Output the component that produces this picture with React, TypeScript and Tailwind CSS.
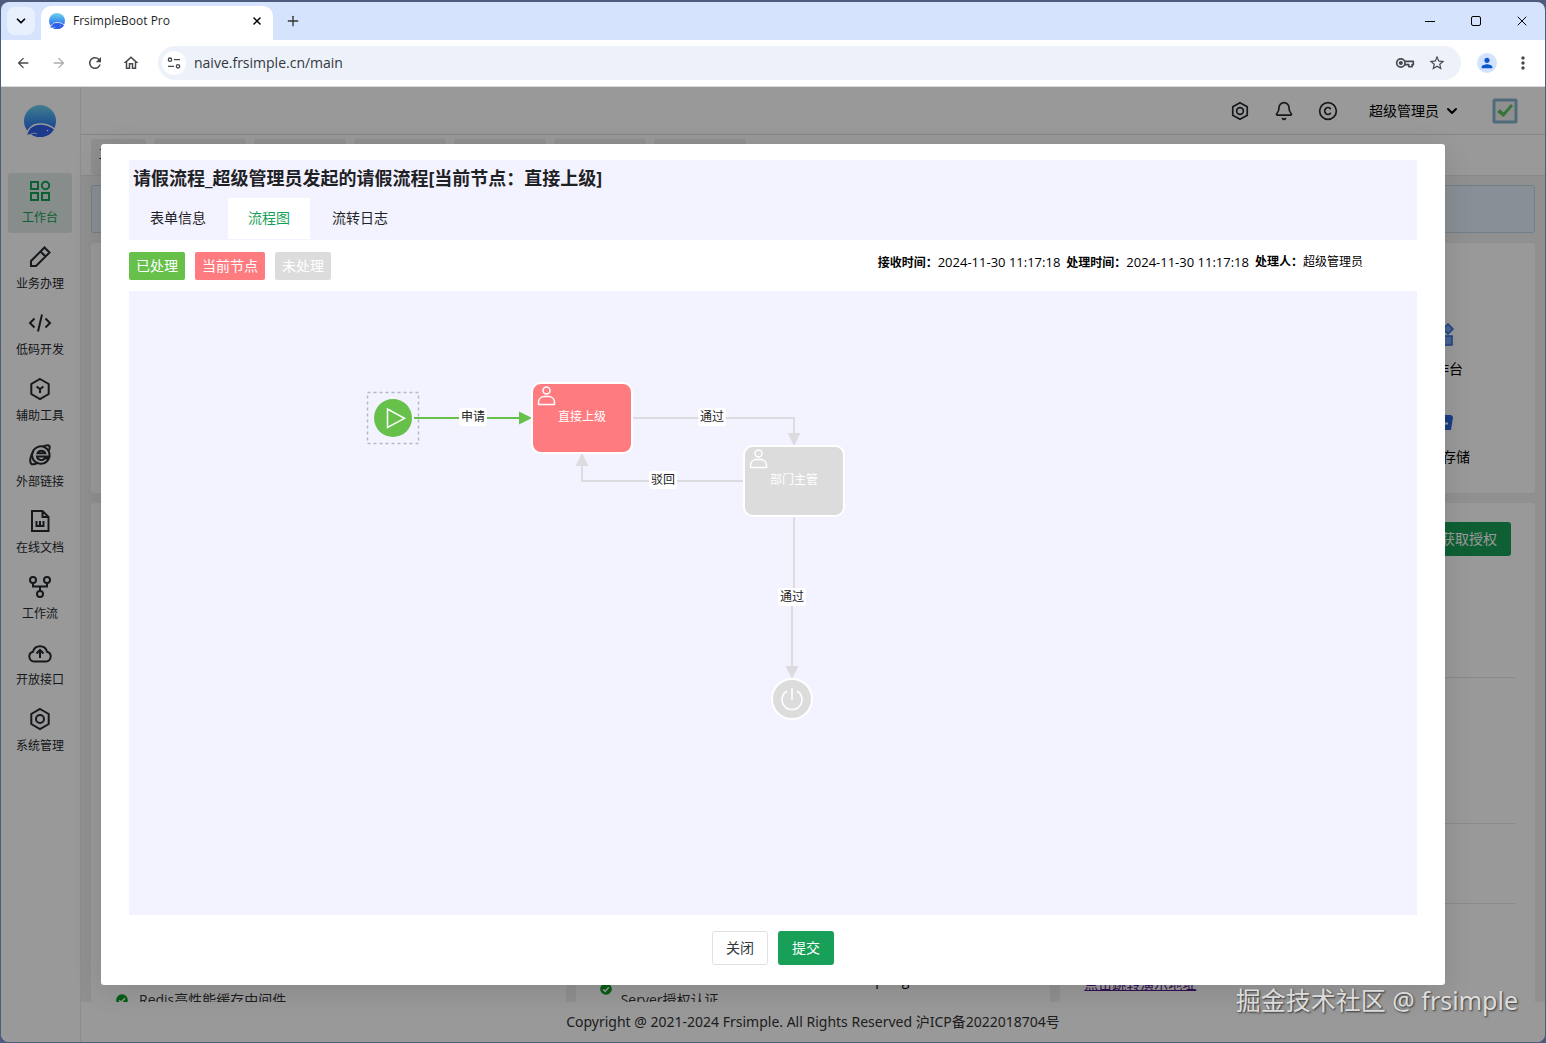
import React, { useState } from 'react';
import { Bell, ChevronDown, Copyright, Plus, X } from 'lucide-react';
import { MdArrowBack, MdArrowForward, MdMoreVert, MdOutlineHome, MdPerson, MdRefresh, MdStarBorder } from 'react-icons/md';

const FONT = "font-['Open_Sans','Noto_Sans_CJK_SC',sans-serif]";
const FONT_WIDE = "font-['Noto_Sans','Noto_Sans_CJK_SC',sans-serif]";

function Icon({ children, className = 'size-6' }: { children: React.ReactNode; className?: string }) {
  return (
    <svg viewBox="0 0 24 24" fill="none" stroke="currentColor" strokeWidth="2" className={className} aria-hidden="true">
      {children}
    </svg>
  );
}

function Logo({ className }: { className: string }) {
  return (
    <svg viewBox="0 0 32 32" className={className} aria-hidden="true">
      <defs>
        <linearGradient id="logo" x1="0" y1="0" x2="0" y2="1">
          <stop offset="0" stopColor="#6fd3ec" />
          <stop offset="0.5" stopColor="#3d93f0" />
          <stop offset="1" stopColor="#2a55e8" />
        </linearGradient>
      </defs>
      <circle cx="16" cy="16" r="16" fill="url(#logo)" />
      <path d="M0 32V26l4-1c2 0 3 2 3 4l-2 3z" fill="#fff" />
      <path d="M2 30c1-7 7-11 14-11s11 2 14 5c-2 5-8 8-14 8-4 0-7-1-9-3z" fill="#2f5fea" />
      <path d="M2 31C4 23 9 19 16 19s11 2 14.500 5" fill="none" stroke="#fff" strokeWidth="1.500" />
      <path d="M7 29c2-1 4-1 6 0" fill="none" stroke="#fff" strokeWidth="0.800" />
      <circle cx="23.500" cy="25.500" r="0.800" fill="#fff" />
    </svg>
  );
}

const settingIcon = (
  <>
    <path d="M12 2l8.700 5v10L12 22l-8.700-5V7z" />
    <circle cx="12" cy="12" r="4" />
  </>
);

const menu = [
  {
    label: '工作台',
    icon: (
      <>
        <path d="M3 3h7v7H3zM3 14h7v7H3zM14 14h7v7h-7z" />
        <circle cx="17.500" cy="6.500" r="3.700" />
      </>
    ),
  },
  { label: '业务办理', icon: <path d="M3 21v-5L16.500 2.500l5 5L8 21zM12.500 6.500l5 5" /> },
  { label: '低码开发', icon: <path d="M6.500 7.500L2 12l4.500 4.500M17.500 7.500L22 12l-4.500 4.500M14 3.500l-4 17" /> },
  { label: '辅助工具', icon: <path d="M12 2l8.700 5v10L12 22l-8.700-5V7zM8.500 9.500L12 12l3.500-2.500M12 12v4" /> },
  {
    label: '外部链接',
    icon: (
      <>
        <path d="M20.800 15.500A8.700 8.700 0 1 1 21.500 12v1.500H9a4.300 4.300 0 0 0 7.500 2z" />
        <path d="M9.500 10.300h7.800a4.200 4.200 0 0 0-7.800 0z" />
        <path d="M14.500 3.700c3.200-1.500 6-1.900 6.900-.6.700 1 .2 2.900-.9 4.900M5.500 8C2.500 12.500 1.300 18.500 3 20.500c1.300 1.500 4 .8 7-.9" />
      </>
    ),
  },
  { label: '在线文档', icon: <path d="M14.500 2H4v20h16.500V8zM14.500 2v6h6M8.500 12v5h7v-5M12 12v5" /> },
  {
    label: '工作流',
    icon: (
      <>
        <circle cx="5" cy="5" r="3" />
        <circle cx="19" cy="5" r="3" />
        <circle cx="12" cy="19" r="3" />
        <path d="M5 8v3.500h14V8M12 11.500V16" />
      </>
    ),
  },
  { label: '开放接口', icon: <path d="M6 20.500a5 5 0 0 1-1-9.800 7.200 7.200 0 0 1 14 0 5 5 0 0 1-1 9.800zM12 17V9M8.500 12.500L12 9l3.500 3.500" /> },
  { label: '系统管理', icon: settingIcon },
];

function TabStrip() {
  return (
    <div className="flex h-[38px] shrink-0 items-center bg-[#d5e3fd]">
      <button aria-label="搜索标签页" className="ml-1.5 flex size-7 items-center justify-center rounded-lg bg-[#e8f0fe]">
        <ChevronDown className="size-3.5" strokeWidth={3} />
      </button>
      <div className="ml-1.5 flex h-[34px] w-[232px] items-center self-end rounded-t-[10px] bg-white pb-1 pl-2 pr-2">
        <Logo className="size-4" />
        <span className="ml-2 flex-1 text-[12px] leading-4 text-[#1f1f1f]">FrsimpleBoot Pro</span>
        <button aria-label="关闭标签页" className="flex size-4 items-center justify-center">
          <X className="size-3" strokeWidth={3} />
        </button>
      </div>
      <button aria-label="新标签页" className="ml-3 flex size-4 items-center justify-center text-[#333]">
        <Plus className="size-4" />
      </button>
      <div className="ml-auto flex">
        <button aria-label="最小化" className="flex w-[46px] items-center justify-center">
          <span className="h-px w-2.5 bg-black" />
        </button>
        <button aria-label="最大化" className="flex w-[46px] items-center justify-center">
          <span className="size-2.5 rounded-[2px] border border-black" />
        </button>
        <button aria-label="关闭" className="flex w-[46px] items-center justify-center">
          <X className="size-4" strokeWidth={1.5} />
        </button>
      </div>
    </div>
  );
}

function AddressBar() {
  return (
    <div className="flex h-[47px] shrink-0 items-center border-b border-[#d8dbe0] bg-white pl-3.5 text-[#45494d]">
      <button aria-label="后退" className="mr-5"><MdArrowBack className="size-4" /></button>
      <button aria-label="前进" className="mr-[19px] text-[#aaadb0]"><MdArrowForward className="size-4" /></button>
      <button aria-label="刷新" className="mr-[18px]"><MdRefresh className="size-4.5" /></button>
      <button aria-label="主页" className="mr-[18px]"><MdOutlineHome className="size-4.5" /></button>
      <div className="flex h-[34px] flex-1 items-center rounded-full bg-[#edf2fa] pl-1 pr-[15px]">
        <span className="flex size-6 items-center justify-center rounded-full bg-white">
          <Icon className="size-4">
            <circle cx="6" cy="7" r="2.500" />
            <circle cx="18" cy="17" r="2.500" />
            <path d="M12 7h9M3 17h9" />
          </Icon>
        </span>
        <input aria-label="地址栏" defaultValue="naive.frsimple.cn/main" className="ml-2 flex-1 bg-transparent text-[14px] leading-5 text-[#33373b] outline-none" />
        <Icon className="size-5">
          <circle cx="7" cy="12" r="5" />
          <circle cx="7" cy="12" r="1.500" fill="currentColor" />
          <path d="M11.500 10H22v4h-1.500v2.500h-4V14h-5" strokeLinejoin="round" />
        </Icon>
        <button aria-label="添加书签" className="ml-[13px]"><MdStarBorder className="size-4.5" /></button>
      </div>
      <button aria-label="个人资料" className="ml-4 flex size-5 items-center justify-center rounded-full bg-[#d3e3fd] text-[#0b57d0]">
        <MdPerson className="size-4" />
      </button>
      <button aria-label="更多" className="ml-4 mr-3"><MdMoreVert className="size-5" /></button>
    </div>
  );
}

function Sidebar() {
  return (
    <nav className="flex w-20 shrink-0 flex-col items-center border-r border-[#ebebeb] bg-white pr-px pt-[18px]">
      <Logo className="size-8" />
      <ul className="mt-9 flex flex-col gap-1.5">
        {menu.map((item, i) => (
          <li key={item.label}>
            <a
              href="#"
              className={
                i === 0
                  ? 'flex h-[60px] w-16 flex-col items-center rounded-[3px] bg-[#dfebe6] pt-1.5 text-[#18a058]'
                  : 'flex h-[60px] w-16 flex-col items-center rounded-[3px] pt-1.5 text-[#262a2e]'
              }
            >
              <Icon>{item.icon}</Icon>
              <span className="mt-[7px] text-[12px] leading-4">{item.label}</span>
            </a>
          </li>
        ))}
      </ul>
    </nav>
  );
}

function CheckDot() {
  return (
    <svg viewBox="0 0 24 24" className="size-3.5 shrink-0" aria-hidden="true">
      <circle cx="12" cy="12" r="10" fill="#0a9c22" />
      <path d="M7 12.500l3.500 3.500L17 9" fill="none" stroke="#fff" strokeWidth="2.500" />
    </svg>
  );
}

function Dashboard() {
  return (
    <div className="flex min-w-0 flex-1 flex-col bg-white">
      <header className="flex h-12 shrink-0 items-center justify-end border-b border-[#e0e0e0] pr-[27px] text-[#262a2e]">
        <button aria-label="设置" className="mr-6"><Icon className="size-5">{settingIcon}</Icon></button>
        <button aria-label="通知" className="mr-6"><Bell className="size-5" /></button>
        <button aria-label="版权" className="mr-[31px]"><Copyright className="size-5" /></button>
        <button className="flex items-center gap-[5px] text-[14px] leading-5 text-black">
          超级管理员
          <ChevronDown className="size-4" strokeWidth={3} />
        </button>
        <svg viewBox="0 0 26 26" className="ml-8 size-6.5" aria-hidden="true">
          <rect x="2" y="2" width="22" height="22" rx="1" fill="#eee" stroke="#86b4cc" strokeWidth="3" />
          <path d="M5 14l3-3 3.500 3.500L19 6l2 2-9.500 11z" fill="#5cc45c" />
        </svg>
      </header>
      <div className="flex h-[41px] shrink-0 gap-2 border-b border-[#e4e4e4] pl-2.5 pt-1">
        <span className="w-[55px] rounded-[3px] bg-[#eee] pl-2 text-[12px] leading-8">工作台</span>
        {[1, 2, 3, 4, 5, 6].map((n) => (
          <span key={n} className="h-8 w-[92px] rounded-[3px] bg-[#f1f1f1]" />
        ))}
      </div>

      <div className="flex min-h-0 flex-1 flex-col gap-2.5 overflow-hidden bg-[#f0f0f0] px-2.5 pt-[9px]">
        <div className="h-12 shrink-0 rounded-[3px] border border-[#c2d2e2] bg-[#e4eefb]" />
        <section className="flex h-[250px] shrink-0 flex-col items-end rounded bg-white pr-[65px] pt-20 text-[14px] leading-5">
          <a href="#" className="flex w-14 flex-col items-center">
            <svg viewBox="0 0 24 24" className="size-6" fill="#7ba4ee" stroke="#2f6fe0" strokeWidth="1.500" aria-hidden="true">
              <path d="M2 2h8v8H2zM2 13h8v9H2zM13 13h9v9h-9zM18 1l5 5-5 5-5-5z" />
            </svg>
            <span className="mt-3">工作台</span>
          </a>
          <a href="#" className="mt-8 flex w-14 flex-col items-center">
            <svg viewBox="0 0 24 24" className="size-6" aria-hidden="true">
              <path d="M2 4h19l2 2-2 13H4z" fill="#2766da" />
              <path d="M13 12.500h5" stroke="#fff" strokeWidth="2" />
            </svg>
            <span className="mt-3">对象存储</span>
          </a>
        </section>
        <div className="grid min-h-0 flex-1 grid-cols-3 gap-2.5 text-[14px] leading-5">
          <section className="flex flex-col justify-end rounded-t bg-white pl-6">
            <p className="-mb-2 flex items-center gap-2.5 text-[#333]">
              <CheckDot />
              Redis高性能缓存中间件
            </p>
          </section>
          <section className="flex flex-col justify-end rounded-t bg-white pl-[23px]">
            <p className="pl-[269px]">Spring</p>
            <p className="-mb-2 flex items-start gap-2 text-[#333]">
              <span className="-mt-2"><CheckDot /></span>
              Server授权认证
            </p>
          </section>
          <section className="flex flex-col rounded-t bg-white px-5 pt-[19px]">
            <button className="mr-1 h-[34px] w-[84px] self-end rounded-[3px] bg-[#18a058] text-white">获取授权</button>
            <div className="mt-[121px] border-t border-[#e6e6e6]" />
            <div className="mt-[145px] border-t border-[#e6e6e6]" />
            <div className="mt-[79px] border-t border-[#e6e6e6]" />
            <a href="#" className="mb-2 mt-auto pl-1 text-[#551a8b] underline">点击跳转演示地址</a>
          </section>
        </div>
      </div>
      <footer className={`flex h-10 shrink-0 items-center justify-center text-[14px] leading-5 text-[#333] ${FONT_WIDE}`}>
        Copyright @ 2021-2024 Frsimple. All Rights Reserved 沪ICP备2022018704号
      </footer>
    </div>
  );
}

function EdgeLabel({ x, y, text }: { x: number; y: number; text: string }) {
  return (
    <g>
      <rect x={x - 14} y={y - 9} width="28" height="18" rx="3" fill="#fff" />
      <text x={x} y={y + 4} textAnchor="middle" fill="#222">{text}</text>
    </g>
  );
}

function TaskNode({ x, y, color, text }: { x: number; y: number; color: string; text: string }) {
  return (
    <g transform={`translate(${x} ${y})`}>
      <rect x="-1" y="-1" width="100" height="70" rx="9" fill={color} stroke="#fff" strokeWidth="2" />
      <g fill="none" stroke="#fff" strokeWidth="1.500">
        <circle cx="13.500" cy="6.500" r="3.500" />
        <path d="M5.500 20.500v-2c0-3.500 2.500-6 6-6h4c3.500 0 6 2.500 6 6v2z" strokeLinejoin="round" />
      </g>
      <text x="49" y="37" textAnchor="middle" fill="#fff">{text}</text>
    </g>
  );
}

function FlowChart() {
  return (
    <svg className="h-full w-full text-[12px]" role="img" aria-label="流程图">
      <rect x="238.500" y="101.500" width="51" height="51" fill="none" stroke="#b5b6c8" strokeWidth="1.500" strokeDasharray="3 3" />
      <circle cx="264" cy="127" r="19" fill="#66c04a" />
      <path d="M258.500 118v18.500l17-9.200z" fill="none" stroke="#fff" strokeWidth="1.500" />

      <path d="M285 127h107" stroke="#66c04a" strokeWidth="2" />
      <path d="M390 120.500l13 6.500-13 6.500z" fill="#66c04a" />
      <g fill="none" stroke="#dcdce0" strokeWidth="2">
        <path d="M504 127h161v16" />
        <path d="M614 190H453v-16" />
        <path d="M665 226v80M663 306v70" />
      </g>
      <g fill="#dcdce0">
        <path d="M658.500 142h13l-6.500 13z" />
        <path d="M446.500 175h13l-6.500-13z" />
        <path d="M656.500 375h13l-6.500 13z" />
      </g>

      <EdgeLabel x={344} y={126} text="申请" />
      <EdgeLabel x={583} y={126} text="通过" />
      <EdgeLabel x={534} y={189} text="驳回" />
      <EdgeLabel x={663} y={306} text="通过" />

      <TaskNode x={404} y={93} color="#fe7c80" text="直接上级" />
      <TaskNode x={616} y={156} color="#dcdcdc" text="部门主管" />

      <circle cx="663" cy="408" r="20" fill="#dcdcdc" stroke="#fff" strokeWidth="2" />
      <path d="M658 400a10 10 0 1 0 10 0M663 397v12" fill="none" stroke="#fff" strokeWidth="1.500" />
    </svg>
  );
}

const tabs = ['表单信息', '流程图', '流转日志'];

const records = [
  { label: '接收时间：', value: '2024-11-30 11:17:18' },
  { label: '处理时间：', value: '2024-11-30 11:17:18' },
];

function TaskDialog() {
  const [active, setActive] = useState('流程图');

  return (
    <div role="dialog" aria-modal="true" className="flex flex-1 flex-col rounded-[3px] bg-white px-7 pb-5 pt-4 shadow-[0_6px_30px_rgba(0,0,0,0.12)]">
      <div className="bg-[#f2f3ff] text-[#1f2225]">
        <h2 className="px-1 pt-1.5 text-[18px] font-bold leading-6">请假流程_超级管理员发起的请假流程[当前节点：直接上级]</h2>
        <div role="tablist" className="mt-2 flex h-[42px] gap-px text-[14px] leading-5">
          {tabs.map((tab) => (
            <button
              key={tab}
              role="tab"
              aria-selected={tab === active}
              onClick={() => setActive(tab)}
              className={tab === active ? 'mb-px bg-white px-5 pb-0.5 text-[#18a058]' : 'mb-px px-[21px] pb-0.5'}
            >
              {tab}
            </button>
          ))}
        </div>
      </div>

      <div className="mt-3 flex items-start gap-2.5 text-[14px] leading-7 text-white">
        <span className="rounded-[2px] bg-[#66c04a] px-[7px]">已处理</span>
        <span className="rounded-[2px] bg-[#fe7c80] px-[7px]">当前节点</span>
        <span className="rounded-[2px] bg-[#dcdcdc] px-[7px]">未处理</span>
        <div className="ml-auto mr-[54px] flex gap-1.5 text-[12px] leading-5 text-black">
          {records.map((r) => (
            <span key={r.label}><b>{r.label}</b><span className="text-[13px]">{r.value}</span></span>
          ))}
          <span><b>处理人：</b>超级管理员</span>
        </div>
      </div>

      <div className="mt-[11px] min-h-0 flex-1 bg-[#f2f3ff]">
        <FlowChart />
      </div>

      <div className="mt-4 flex justify-center gap-2.5 text-[14px] leading-5">
        <button className="h-[34px] w-14 rounded-[3px] border border-[#e0e0e6] text-[#333639]">关闭</button>
        <button className="h-[34px] w-14 rounded-[3px] bg-[#18a058] text-white">提交</button>
      </div>
    </div>
  );
}

export default function App() {
  return (
    <div className={`flex h-screen flex-col bg-[#4d5b7c] px-px pb-px pt-0.5 ${FONT}`}>
      <div className="flex min-h-0 flex-1 flex-col overflow-hidden rounded-lg">
        <TabStrip />
        <AddressBar />
        <div className="relative flex min-h-0 flex-1">
          <Sidebar />
          <Dashboard />
          <div className="absolute inset-0 flex bg-black/40 px-[100px] py-[57px]">
            <TaskDialog />
          </div>
          <p className={`absolute bottom-6 right-[27px] text-[25px] leading-9 text-[#dcdcdc] [text-shadow:1px_1px_2px_#333] ${FONT_WIDE}`}>
            掘金技术社区 @ frsimple
          </p>
        </div>
      </div>
    </div>
  );
}
